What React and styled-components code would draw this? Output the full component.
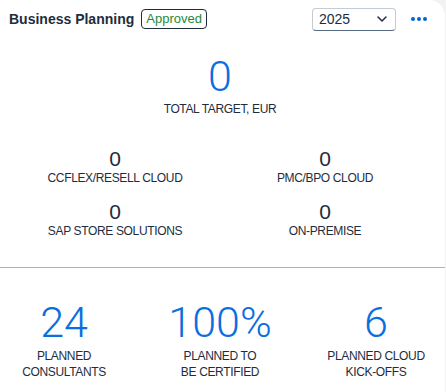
import React from 'react';
import styled, { createGlobalStyle } from 'styled-components';

const GlobalStyle = createGlobalStyle`
  body {
    margin: 0;
    background: #f1f2f3;
    overflow: hidden;
  }
`;

const Card = styled.div`
  box-sizing: border-box;
  width: 450px;
  height: 392px;
  margin-left: -5px;
  background: #ffffff;
  border-top-right-radius: 16px;
  font-family: "Liberation Sans", Arial, sans-serif;
  color: #1d2d3e;
`;

const Header = styled.div`
  display: flex;
  align-items: center;
  height: 38px;
  padding: 0 18px 0 14px;
`;

const Title = styled.h2`
  margin: 0;
  font-size: 14px;
  font-weight: 700;
  color: #1d2d3e;
`;

const Badge = styled.span`
  margin-left: 7px;
  padding: 0 4px;
  height: 18px;
  line-height: 18px;
  border: 1px solid #1d2d3e;
  border-radius: 4px;
  font-size: 13px;
  color: #1f8a3c;
`;

const Spacer = styled.div`
  flex: 1;
`;

const YearSelect = styled.div`
  box-sizing: border-box;
  display: flex;
  align-items: center;
  justify-content: space-between;
  width: 84px;
  height: 23px;
  padding: 0 8px 0 6px;
  border: 1px solid #c3cbd3;
  border-bottom-color: #556b82;
  border-radius: 4px;
  font-size: 14px;
  color: #1d2d3e;
`;

const MoreButton = styled.div`
  display: flex;
  gap: 2px;
  margin-left: 15px;
`;

const Dot = styled.span`
  width: 4px;
  height: 4px;
  border-radius: 50%;
  background: #0064d9;
`;

const Hero = styled.div`
  display: flex;
  flex-direction: column;
  align-items: center;
  padding-top: 17px;
`;

const BigValue = styled.div`
  font-family: Roboto, "Liberation Sans", sans-serif;
  font-weight: 300;
  font-size: 43px;
  line-height: 1;
  color: #0b6ee0;
`;

const Label = styled.div`
  font-size: 12px;
  letter-spacing: -0.35px;
  line-height: 16px;
  text-transform: uppercase;
  text-align: center;
  color: #1d2d3e;
`;

const HeroLabel = styled(Label)`
  margin-top: 3px;
`;

const SplitGrid = styled.div`
  display: grid;
  grid-template-columns: 210px 210px;
  justify-content: center;
  row-gap: 15px;
  margin-top: 31px;
`;

const SplitItem = styled.div`
  display: flex;
  flex-direction: column;
  align-items: center;
`;

const SmallValue = styled.div`
  font-size: 21px;
  line-height: 22px;
  color: #1d2d3e;
`;

const Divider = styled.hr`
  margin: 28px 0 0;
  border: 0;
  border-top: 1px solid #a9b4be;
`;

const KpiRow = styled.div`
  display: grid;
  grid-template-columns: repeat(3, 128px);
  column-gap: 28px;
  padding-left: 5px;
  margin-top: 33px;
`;

const Kpi = styled.div`
  display: flex;
  flex-direction: column;
  align-items: center;
`;

const KpiLabel = styled(Label)`
  margin-top: 4px;
`;

const split = [
  { value: 0, label: 'CCFLEX/RESELL CLOUD' },
  { value: 0, label: 'PMC/BPO CLOUD' },
  { value: 0, label: 'SAP STORE SOLUTIONS' },
  { value: 0, label: 'ON-PREMISE' },
];

const kpis = [
  { value: '24', lines: ['PLANNED', 'CONSULTANTS'] },
  { value: '100%', lines: ['PLANNED TO', 'BE CERTIFIED'] },
  { value: '6', lines: ['PLANNED CLOUD', 'KICK-OFFS'] },
];

const Chevron = () => (
  <svg width="10" height="6" viewBox="0 0 10 6">
    <path d="M1 1l4 4 4-4" fill="none" stroke="#1d2d3e" strokeWidth="1.5" strokeLinecap="round" strokeLinejoin="round" />
  </svg>
);

export default function App() {
  return (
    <>
      <GlobalStyle />
      <Card>
        <Header>
          <Title>Business Planning</Title>
          <Badge>Approved</Badge>
          <Spacer />
          <YearSelect>
            <span>2025</span>
            <Chevron />
          </YearSelect>
          <MoreButton>
            <Dot />
            <Dot />
            <Dot />
          </MoreButton>
        </Header>

        <Hero>
          <BigValue>0</BigValue>
          <HeroLabel>Total Target, EUR</HeroLabel>
        </Hero>

        <SplitGrid>
          {split.map(s => (
            <SplitItem key={s.label}>
              <SmallValue>{s.value}</SmallValue>
              <Label>{s.label}</Label>
            </SplitItem>
          ))}
        </SplitGrid>

        <Divider />

        <KpiRow>
          {kpis.map(k => (
            <Kpi key={k.value}>
              <BigValue>{k.value}</BigValue>
              <KpiLabel>
                {k.lines[0]}
                <br />
                {k.lines[1]}
              </KpiLabel>
            </Kpi>
          ))}
        </KpiRow>
      </Card>
    </>
  );
}
